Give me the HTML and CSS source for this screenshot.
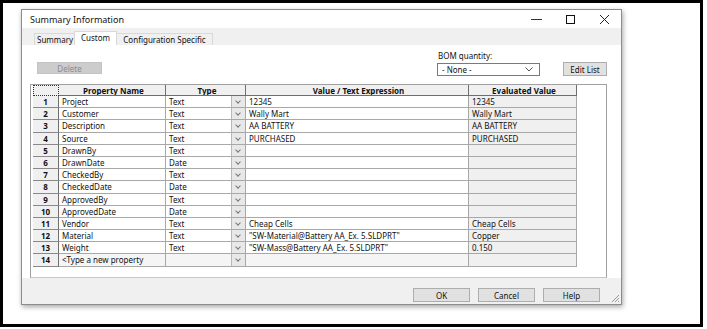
FILE: index.html
```html
<!DOCTYPE html>
<html lang="en">
<head>
  <meta charset="UTF-8" />
  <title>Summary Information</title>
  <link rel="stylesheet" href="styles.css">
</head>
<body>
  <div class="frame">
    <div class="dialog">
      <div class="titlebar">
        <span class="title">Summary Information</span>
        <div class="wincontrols">
          <span class="ctl"><svg width="11" height="11" viewBox="0 0 11 11"><line x1="0" y1="5.5" x2="11" y2="5.5" stroke="#333" stroke-width="1"/></svg></span>
          <span class="ctl"><svg width="11" height="11" viewBox="0 0 11 11"><rect x="1.5" y="1.5" width="8" height="8" fill="none" stroke="#111" stroke-width="1"/></svg></span>
          <span class="ctl"><svg width="11" height="11" viewBox="0 0 11 11"><path d="M1 1L10 10M10 1L1 10" stroke="#222" stroke-width="1"/></svg></span>
        </div>
      </div>

      <div class="tabs">
        <div class="tab">Summary</div>
        <div class="tab active">Custom</div>
        <div class="tab">Configuration Specific</div>
      </div>

      <div class="panel">
        <div class="toolbar">
          <button class="btn delete">Delete</button>
          <div class="bom">
            <label>BOM quantity:</label>
            <div class="select">- None -
              <svg width="8" height="5" viewBox="0 0 8 5"><polyline points="0.5,0.5 4,4 7.5,0.5" fill="none" stroke="#555" stroke-width="1"/></svg>
            </div>
          </div>
          <button class="btn edit">Edit List</button>
        </div>

        <div class="gridframe">
          <div class="grid">
            <div class="hd corner"></div>
            <div class="hd">Property Name</div>
            <div class="hd">Type</div>
            <div class="hd">Value / Text Expression</div>
            <div class="hd">Evaluated Value</div>

            <div class="rh">1</div><div class="c">Project</div><div class="c type">Text<span class="dd"></span></div><div class="c">12345</div><div class="c ev">12345</div>
            <div class="rh">2</div><div class="c">Customer</div><div class="c type">Text<span class="dd"></span></div><div class="c">Wally Mart</div><div class="c ev">Wally Mart</div>
            <div class="rh">3</div><div class="c">Description</div><div class="c type">Text<span class="dd"></span></div><div class="c">AA BATTERY</div><div class="c ev">AA BATTERY</div>
            <div class="rh">4</div><div class="c">Source</div><div class="c type">Text<span class="dd"></span></div><div class="c">PURCHASED</div><div class="c ev">PURCHASED</div>
            <div class="rh">5</div><div class="c">DrawnBy</div><div class="c type">Text<span class="dd"></span></div><div class="c"></div><div class="c ev"></div>
            <div class="rh">6</div><div class="c">DrawnDate</div><div class="c type">Date<span class="dd"></span></div><div class="c"></div><div class="c ev"></div>
            <div class="rh">7</div><div class="c">CheckedBy</div><div class="c type">Text<span class="dd"></span></div><div class="c"></div><div class="c ev"></div>
            <div class="rh">8</div><div class="c">CheckedDate</div><div class="c type">Date<span class="dd"></span></div><div class="c"></div><div class="c ev"></div>
            <div class="rh">9</div><div class="c">ApprovedBy</div><div class="c type">Text<span class="dd"></span></div><div class="c"></div><div class="c ev"></div>
            <div class="rh">10</div><div class="c">ApprovedDate</div><div class="c type">Date<span class="dd"></span></div><div class="c"></div><div class="c ev"></div>
            <div class="rh">11</div><div class="c">Vendor</div><div class="c type">Text<span class="dd"></span></div><div class="c">Cheap Cells</div><div class="c ev">Cheap Cells</div>
            <div class="rh">12</div><div class="c">Material</div><div class="c type">Text<span class="dd"></span></div><div class="c">"SW-Material@Battery AA_Ex. 5.SLDPRT"</div><div class="c ev">Copper</div>
            <div class="rh">13</div><div class="c">Weight</div><div class="c type">Text<span class="dd"></span></div><div class="c">"SW-Mass@Battery AA_Ex. 5.SLDPRT"</div><div class="c ev">0.150</div>
            <div class="rh">14</div><div class="c new">&lt;Type a new property</div><div class="c type new"><span class="dd"></span></div><div class="c new"></div><div class="c ev"></div>
          </div>
        </div>
      </div>

      <div class="footer">
        <button class="btn foot">OK</button>
        <button class="btn foot">Cancel</button>
        <button class="btn foot">Help</button>
        <svg class="grip" width="10" height="10" viewBox="0 0 10 10"><path d="M9 2L2 9M9 5L5 9M9 8L8 9" stroke="#999" stroke-width="1"/></svg>
      </div>
    </div>
  </div>
</body>
</html>
```

FILE: styles.css
```css
body {
  margin: 0;
  background: #ffffff;
  font-family: 'Noto Sans', 'Open Sans', sans-serif;
  font-size: 8px;
  color: #111;
}
.frame {
  width: 703px;
  height: 327px;
  box-sizing: border-box;
  border: 3px solid #000;
  padding: 6px 0 0 18px;
}
.dialog {
  width: 601px;
  height: 296px;
  box-sizing: border-box;
  border: 1px solid #8c8c8c;
  background: #fff;
  box-shadow: 1px 2px 5px rgba(0, 0, 0, 0.35);
  display: flex;
  flex-direction: column;
  position: relative;
}
.titlebar {
  height: 18px;
  display: flex;
  align-items: center;
  justify-content: space-between;
  padding-left: 8px;
}
.title {
  font-size: 9px;
}
.wincontrols {
  display: flex;
  height: 18px;
}
.ctl {
  width: 34px;
  display: flex;
  align-items: center;
  justify-content: center;
}
.tabs {
  height: 17px;
  background: #f0f0f0;
  display: flex;
  align-items: flex-end;
  padding-left: 12px;
  box-sizing: border-box;
}
.tab {
  height: 12px;
  line-height: 11px;
  padding: 0 2px;
  text-align: center;
  border: 1px solid #d9d9d9;
  border-bottom: none;
  margin-right: -1px;
  background: #f0f0f0;
  box-sizing: border-box;
  white-space: nowrap;
}
.tab:first-child { width: 41px; }
.tab.active {
  width: 43px;
  height: 14px;
  line-height: 12px;
  background: #fff;
  position: relative;
  z-index: 1;
}
.tab:last-child { width: 97px; }
.panel {
  height: 233px;
  padding: 5px 14px 0 8px;
  box-sizing: border-box;
  display: flex;
  flex-direction: column;
}
.toolbar {
  display: flex;
  align-items: flex-end;
  height: 26px;
}
.btn {
  font-family: inherit;
  font-size: 8px;
  padding: 0;
  border: 1px solid #adadad;
  background: #e1e1e1;
  color: #111;
  box-sizing: border-box;
}
.delete {
  width: 65px;
  height: 12px;
  margin: 0 0 2px 7px;
  background: #cccccc;
  border-color: #c4c4c4;
  color: #8c8c8c;
}
.bom {
  margin-left: auto;
  display: flex;
  flex-direction: column;
  margin-right: 23px;
}
.bom label {
  height: 12px;
  line-height: 10px;
  padding-left: 1px;
}
.select {
  width: 103px;
  height: 13px;
  box-sizing: border-box;
  border: 1px solid #7a7a7a;
  padding: 0 6px 0 4px;
  display: flex;
  align-items: center;
  justify-content: space-between;
  line-height: 11px;
}
.edit {
  width: 44px;
  height: 14px;
}
.gridframe {
  margin-top: 8px;
  height: 194px;
  box-sizing: border-box;
  border: 1px solid #a0a0a0;
  border-bottom-color: #c8c8c8;
  padding-left: 2px;
}
.grid {
  display: grid;
  grid-template-columns: 26px 107px 80px 223px 108px;
  grid-template-rows: 11px repeat(14, 12.2px);
}
.grid > div {
  box-sizing: border-box;
  border-right: 1px solid #a8a8a8;
  border-bottom: 1px solid #a8a8a8;
  padding-left: 3px;
  line-height: 11px;
  white-space: nowrap;
  overflow: hidden;
}
.hd {
  background: #f0f0f0;
  font-weight: bold;
  text-align: center;
  border-color: #6e6e6e !important;
}
.hd.corner {
  border: 1px dotted #333 !important;
}
.rh {
  background: #f0f0f0;
  font-weight: bold;
  text-align: center;
  padding-left: 0 !important;
  border-right-color: #6e6e6e !important;
  border-bottom-color: #8a8a8a !important;
}
.type {
  display: flex;
  padding-right: 0;
}
.dd {
  width: 13px;
  height: 100%;
  margin-left: auto;
  background: #e8e8e8;
  border-left: 1px solid #b8b8b8;
  position: relative;
}
.dd::after {
  content: "";
  position: absolute;
  left: 4px;
  top: 3px;
  width: 3px;
  height: 3px;
  border-right: 1px solid #777;
  border-bottom: 1px solid #777;
  transform: rotate(45deg);
}
.ev {
  background: #f0f0f0;
}
.new {
  background: #f5f5f5;
}
.footer {
  flex: 1;
  background: #f0f0f0;
  display: flex;
  justify-content: flex-end;
  align-items: flex-start;
  padding: 10px 21px 0 0;
  gap: 8px;
  position: relative;
}
.foot {
  width: 57px;
  height: 14px;
}
.grip {
  position: absolute;
  right: 1px;
  bottom: 1px;
}
```
